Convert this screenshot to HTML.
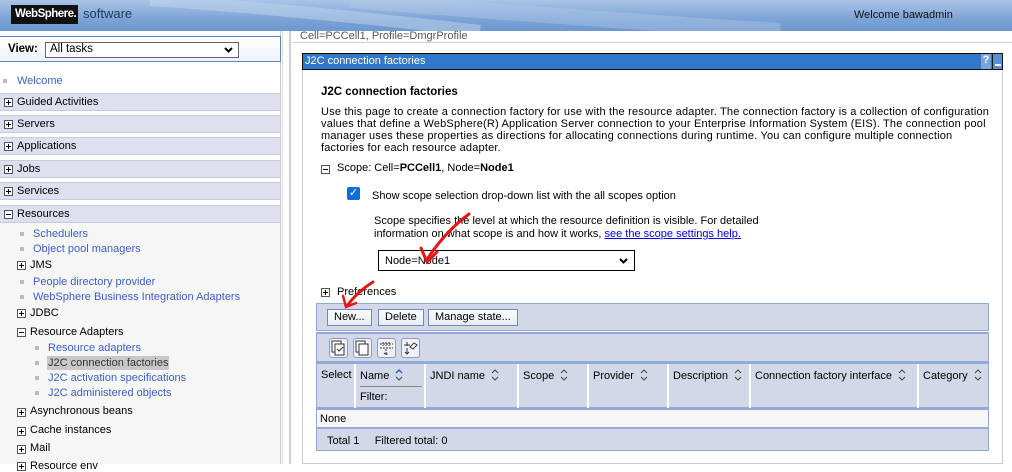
<!DOCTYPE html>
<html><head><meta charset="utf-8"><style>
*{margin:0;padding:0;box-sizing:border-box}
body{width:1012px;height:464px;overflow:hidden;background:#fff;font-family:"Liberation Sans","DejaVu Sans",sans-serif;font-size:11px;color:#000;position:relative}
.a{position:absolute;white-space:nowrap}
.hdr{left:0;top:0;width:1012px;height:31px;background:linear-gradient(180deg,#a9c4e6 0%,#7ea4d6 60%,#6d98d0 100%)}
.logo{left:11px;top:5px;height:19px;width:67px;overflow:hidden;background:#111;color:#fff;font-weight:bold;font-size:11.5px;letter-spacing:-0.5px;padding:3px 0 0 4px}
.sw{left:83px;top:6px;color:#243a5a;font-size:13px}
.nav{left:0;top:31px;width:281px;height:433px;border-right:1px solid #c8c8c8}
.sep{left:282px;top:31px;width:9px;height:433px;background:#fff;border-left:1px solid #ddd;border-right:2px solid #d0d0d0}
.view{left:0;top:36px;width:281px;height:26px;border:1px solid #5a84bd;border-left:none;background:linear-gradient(#fff,#eef2f8)}
.sec{left:0;width:281px;height:18px;background:#dde0ee;border:1px solid #c9ccd8;border-left:none;padding:2px 0 0 17px}
.pb{position:absolute;width:9px;height:9px;border:1px solid #555;background:#fff}
.pb::before{content:"";position:absolute;left:1px;top:3px;width:5px;height:1px;background:#000}
.pb.p::after{content:"";position:absolute;left:3px;top:1px;width:1px;height:5px;background:#000}
.lk{color:#3a5fc8}
.bul{position:absolute;width:4px;height:4px;background:#bbb}
.tb{left:316px;width:673px;background:#d2d8e8;border:1px solid #94aad6}
.btn{position:absolute;top:5px;height:17px;border:1px solid #6a8ac0;background:linear-gradient(#fbfcfe,#e8ecf4);font-size:11px;padding:1px 6px 0}
.ic{position:absolute;top:4px;width:19px;height:20px;border:1px solid #8a9ac0;border-radius:3px;background:#f0f2f8}
.th{position:absolute;top:0;height:45px;border-right:2px solid #fff;padding:5px 4px;font-size:11px}
.so{display:inline-block;vertical-align:-2px;margin-left:6px}
</style></head><body>
<div class="a hdr"></div>
<svg class="a" style="left:0;top:0" width="1012" height="31"><path d="M150 0 Q300 10 480 31" stroke="#c2d5ee" stroke-width="12" fill="none" opacity=".5"/><path d="M350 0 Q600 20 780 31" stroke="#b5cbe9" stroke-width="16" fill="none" opacity=".4"/></svg>
<div class="a logo">WebSphere.</div>
<div class="a sw">software</div>
<div class="a" style="left:854px;top:9px;font-size:11px;color:#111">Welcome bawadmin</div>

<div class="a nav"></div>
<div class="a sep"></div>
<div class="a view"></div>
<div class="a" style="left:8px;top:43px;font-weight:bold;font-size:11.5px">View:</div>
<div class="a" style="left:45px;top:42px;width:194px;height:16px;border:1px solid #666;background:#fff;padding:0 4px;font-size:11.5px">All tasks<svg style="position:absolute;right:5px;top:4px" width="9" height="6"><path d="M1 1l3.5 3.5L8 1" stroke="#000" stroke-width="2" fill="none"/></svg></div>
<div class="bul" style="left:3px;top:79px"></div><div class="a lk" style="left:17px;top:75px">Welcome</div>
<div class="a sec" style="top:93px"><span class="pb p" style="left:4px;top:4px"></span>Guided Activities</div>
<div class="a sec" style="top:115px"><span class="pb p" style="left:4px;top:4px"></span>Servers</div>
<div class="a sec" style="top:137px"><span class="pb p" style="left:4px;top:4px"></span>Applications</div>
<div class="a sec" style="top:160px"><span class="pb p" style="left:4px;top:4px"></span>Jobs</div>
<div class="a sec" style="top:182px"><span class="pb p" style="left:4px;top:4px"></span>Services</div>
<div class="a" style="left:0;top:222px;width:281px;height:242px;background:#f6f6f6;border-right:1px solid #c9ccd8"></div>
<div class="a sec" style="top:205px"><span class="pb" style="left:4px;top:4px"></span>Resources</div>
<div class="bul" style="left:20px;top:232px"></div><div class="a lk" style="left:33px;top:228px">Schedulers</div>
<div class="bul" style="left:20px;top:247px"></div><div class="a lk" style="left:33px;top:243px">Object pool managers</div>
<span class="pb p" style="left:17px;top:261px"></span><div class="a" style="left:30px;top:259px">JMS</div>
<div class="bul" style="left:20px;top:280px"></div><div class="a lk" style="left:33px;top:276px">People directory provider</div>
<div class="bul" style="left:20px;top:295px"></div><div class="a lk" style="left:33px;top:291px">WebSphere Business Integration Adapters</div>
<span class="pb p" style="left:17px;top:309px"></span><div class="a" style="left:30px;top:307px">JDBC</div>
<span class="pb" style="left:17px;top:328px"></span><div class="a" style="left:30px;top:326px">Resource Adapters</div>
<div class="bul" style="left:35px;top:346px"></div><div class="a lk" style="left:48px;top:342px">Resource adapters</div>
<div class="bul" style="left:35px;top:361px"></div><div class="a" style="left:47px;top:356px;background:#c8c8c8;padding:1px 1px;color:#333">J2C connection factories</div>
<div class="bul" style="left:35px;top:376px"></div><div class="a lk" style="left:48px;top:372px">J2C activation specifications</div>
<div class="bul" style="left:35px;top:391px"></div><div class="a lk" style="left:48px;top:387px">J2C administered objects</div>
<span class="pb p" style="left:17px;top:408px"></span><div class="a" style="left:30px;top:405px">Asynchronous beans</div>
<span class="pb p" style="left:17px;top:427px"></span><div class="a" style="left:30px;top:424px">Cache instances</div>
<span class="pb p" style="left:17px;top:445px"></span><div class="a" style="left:30px;top:442px">Mail</div>
<span class="pb p" style="left:17px;top:462px"></span><div class="a" style="left:30px;top:460px">Resource env</div>

<div class="a" style="left:300px;top:30px;color:#555">Cell=PCCell1, Profile=DmgrProfile</div>
<div class="a" style="left:293px;top:42px;width:719px;height:1px;background:#ccc"></div>
<div class="a" style="left:302px;top:53px;width:701px;height:411px;border:1px solid #ccc;border-top:none"></div>
<div class="a" style="left:302px;top:53px;width:701px;height:17px;background:#3178c8;border:1px solid #111;color:#fff;padding:1px 2px">J2C connection factories
<span style="position:absolute;right:11px;top:0;width:10px;height:15px;background:#7aa4d8;color:#fff;font-weight:bold;text-align:center">?</span>
<span style="position:absolute;right:0;top:0;width:10px;height:15px;background:#5b8fd0;border-left:1px solid #111"><span style="position:absolute;left:2px;top:10px;width:6px;height:2px;background:#fff"></span></span></div>

<div class="a" style="left:321px;top:86px;font-weight:bold;font-size:11.5px">J2C connection factories</div>
<div class="a" style="left:321px;top:106px;line-height:12px;font-size:11px;letter-spacing:0.19px">Use this page to create a connection factory for use with the resource adapter. The connection factory is a collection of configuration<br>values that define a WebSphere(R) Application Server connection to your Enterprise Information System (EIS). The connection pool<br>manager uses these properties as directions for allocating connections during runtime. You can configure multiple connection<br>factories for each resource adapter.</div>
<span class="pb" style="left:321px;top:165px"></span>
<div class="a" style="left:337px;top:162px">Scope: Cell=<b>PCCell1</b>, Node=<b>Node1</b></div>
<div class="a" style="left:347px;top:187px;width:13px;height:13px;background:#0a6ed8;border-radius:2px;color:#fff;font-size:11px;line-height:13px;text-align:center;font-weight:bold">&#10003;</div>
<div class="a" style="left:372px;top:190px">Show scope selection drop-down list with the all scopes option</div>
<div class="a" style="left:374px;top:215px;line-height:13px">Scope specifies the level at which the resource definition is visible. For detailed<br>information on what scope is and how it works, <span style="color:#00e;text-decoration:underline">see the scope settings help.</span></div>
<div class="a" style="left:378px;top:250px;width:257px;height:21px;border:1px solid #000;padding:4px 6px">Node=Node1<svg style="position:absolute;right:6px;top:7px" width="9" height="6"><path d="M1 1l3.5 3.5L8 1" stroke="#000" stroke-width="2" fill="none"/></svg></div>
<span class="pb p" style="left:321px;top:288px"></span>
<div class="a" style="left:337px;top:286px">Preferences</div>

<div class="a tb" style="top:303px;height:28px">
<div class="btn" style="left:10px">New...</div>
<div class="btn" style="left:61px">Delete</div>
<div class="btn" style="left:111px">Manage state...</div></div>
<div class="a tb" style="top:332px;height:30px;border-top:2px solid #94aad6">
<div class="ic" style="left:12px"><svg width="17" height="18"><rect x="2" y="2" width="9" height="11" fill="#fff" stroke="#333"/><rect x="5" y="5" width="9" height="11" fill="#fff" stroke="#333"/><path d="M7 10l2 2 4-4" stroke="#333" fill="none"/></svg></div>
<div class="ic" style="left:36px"><svg width="17" height="18"><rect x="2" y="2" width="9" height="11" fill="#fff" stroke="#333"/><rect x="5" y="5" width="9" height="11" fill="#fff" stroke="#333"/></svg></div>
<div class="ic" style="left:60px"><svg width="17" height="18"><path d="M2 5h13M2 9h13M5 3v4M8 3v4M11 3v4M8 10v6M6 14l2 2 2-2" stroke="#333" fill="none" stroke-dasharray="2 1"/></svg></div>
<div class="ic" style="left:84px"><svg width="17" height="18"><path d="M2 6h6M5 3v4M5 9v6M3 13l2 2 2-2" stroke="#333" fill="none"/><path d="M8 8l4-4 3 2-4 4z" fill="#fff" stroke="#333"/></svg></div>
</div>
<div class="a tb" style="top:362px;height:46px;border-top:2px solid #94aad6">
<div class="th" style="left:0;width:39px;padding-left:4px">Select</div>
<div class="th" style="left:39px;width:70px">Name<svg class="so" width="8" height="12"><path d="M1 4l3-3 3 3" stroke="#1b5ac0" stroke-width="1.3" fill="none"/><path d="M1 8l3 3 3-3" stroke="#444" fill="none"/></svg><div style="position:absolute;left:4px;top:22px;width:62px;border-top:1px solid #888;padding-top:4px">Filter:</div></div>
<div class="th" style="left:109px;width:93px">JNDI name<svg class="so" width="8" height="12"><path d="M1 4l3-3 3 3M1 8l3 3 3-3" stroke="#444" fill="none"/></svg></div>
<div class="th" style="left:202px;width:70px">Scope<svg class="so" width="8" height="12"><path d="M1 4l3-3 3 3M1 8l3 3 3-3" stroke="#444" fill="none"/></svg></div>
<div class="th" style="left:272px;width:80px">Provider<svg class="so" width="8" height="12"><path d="M1 4l3-3 3 3M1 8l3 3 3-3" stroke="#444" fill="none"/></svg></div>
<div class="th" style="left:352px;width:82px">Description<svg class="so" width="8" height="12"><path d="M1 4l3-3 3 3M1 8l3 3 3-3" stroke="#444" fill="none"/></svg></div>
<div class="th" style="left:434px;width:168px">Connection factory interface<svg class="so" width="8" height="12"><path d="M1 4l3-3 3 3M1 8l3 3 3-3" stroke="#444" fill="none"/></svg></div>
<div class="th" style="left:602px;width:71px;border-right:none">Category<svg class="so" width="8" height="12"><path d="M1 4l3-3 3 3M1 8l3 3 3-3" stroke="#444" fill="none"/></svg></div>
</div>
<div class="a" style="left:316px;top:408px;width:673px;height:20px;background:#f6f6f6;border:1px solid #94aad6;border-top:2px solid #94aad6;padding:3px 3px">None</div>
<div class="a tb" style="top:428px;height:23px;padding:6px 10px">Total 1&nbsp;&nbsp;&nbsp;&nbsp;&nbsp;Filtered total: 0</div>

<svg class="a" style="left:0;top:0" width="1012" height="464">
<path d="M469 214 Q445 232 428 258" stroke="#e01818" stroke-width="3" fill="none" stroke-linecap="round"/>
<path d="M421 248 L427 262 L437 252" stroke="#e01818" stroke-width="3" fill="none" stroke-linecap="round"/>
<path d="M373 282 Q357 292 347 306" stroke="#e01818" stroke-width="3" fill="none" stroke-linecap="round"/>
<path d="M343 296 L346 307 L356 303" stroke="#e01818" stroke-width="2.5" fill="none" stroke-linecap="round"/>
</svg>
</body></html>
